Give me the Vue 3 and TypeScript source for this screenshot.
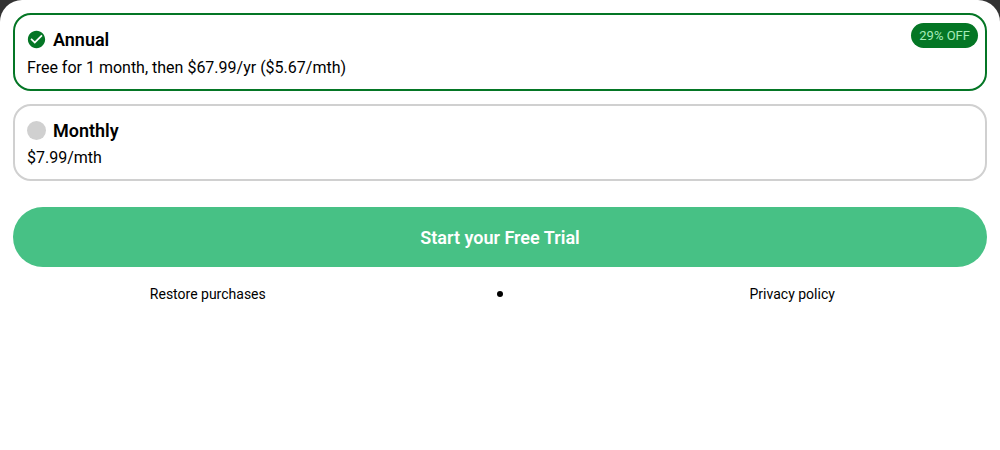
<script setup lang="ts">
import { ref } from 'vue'

interface Plan {
  id: string
  name: string
  price: string
  discount?: string
}

const plans: Plan[] = [
  {
    id: 'annual',
    name: 'Annual',
    price: 'Free for 1 month, then $67.99/yr ($5.67/mth)',
    discount: '29% OFF',
  },
  { id: 'monthly', name: 'Monthly', price: '$7.99/mth' },
]

const selected = ref('annual')
</script>

<template>
  <main class="sheet">
    <form class="paywall" @submit.prevent>
      <div class="plans" role="radiogroup" aria-label="Plans">
        <label
          v-for="plan in plans"
          :key="plan.id"
          class="plan"
          :class="{ selected: selected === plan.id }"
          :for="plan.id"
        >
          <span class="heading">
            <span class="mark">
              <input :id="plan.id" v-model="selected" type="radio" name="plan" :value="plan.id" />
              <svg v-if="selected === plan.id" viewBox="1 1 22 22" aria-hidden="true">
                <path
                  d="M12 2C6.48 2 2 6.48 2 12s4.48 10 10 10 10-4.48 10-10S17.52 2 12 2zm-2 15l-5-5 1.41-1.41L10 14.17l7.59-7.59L19 8l-9 9z"
                />
              </svg>
            </span>
            <span class="name">{{ plan.name }}</span>
          </span>
          <span class="price">{{ plan.price }}</span>
          <span v-if="plan.discount" class="badge">{{ plan.discount }}</span>
        </label>
      </div>
      <button class="cta" type="submit">Start your Free Trial</button>
    </form>
    <footer class="links">
      <a href="#restore">Restore purchases</a>
      <span class="dot"></span>
      <a href="#privacy">Privacy policy</a>
    </footer>
  </main>
</template>

<style>
body {
  background: #333333;
}
</style>

<style scoped>
.sheet {
  box-sizing: border-box;
  min-height: 100vh;
  padding: 13px;
  border-radius: 22px 22px 0 0;
  background: #ffffff;
  color: #000000;
  font-family: Roboto, 'Liberation Sans', sans-serif;
}

.paywall {
  display: flex;
  flex-direction: column;
  gap: 26px;
}

.plans {
  display: flex;
  flex-direction: column;
  gap: 13px;
}

.plan {
  position: relative;
  display: flex;
  flex-direction: column;
  gap: 4px;
  padding: 12px 12px 11px;
  border: 2px solid #d0d0d0;
  border-radius: 18px;
  cursor: pointer;
}

.plan.selected {
  gap: 5px;
  border-color: #047625;
}

.heading {
  display: flex;
  align-items: flex-start;
  gap: 7px;
}

.mark {
  display: grid;
  width: 19px;
  height: 19px;
  margin-top: 3px;
}

.mark input,
.mark svg {
  grid-area: 1 / 1;
  width: 19px;
  height: 19px;
}

.mark input {
  appearance: none;
  margin: 0;
  border-radius: 50%;
  background: #d0d0d0;
}

.mark input:checked {
  background: transparent;
}

.mark svg {
  fill: #047625;
  pointer-events: none;
}

.name {
  font-size: 18px;
  line-height: 26px;
  font-weight: 600;
}

.price {
  font-size: 16px;
  line-height: 20px;
}

.badge {
  position: absolute;
  top: 8px;
  right: 7px;
  padding: 0 8px;
  border-radius: 13px;
  background: #047625;
  color: #a4ecb8;
  font-size: 13px;
  line-height: 25px;
}

.cta {
  height: 60px;
  border: 0;
  border-radius: 30px;
  background: #47c185;
  color: #ffffff;
  font-family: inherit;
  font-size: 18px;
  font-weight: 600;
  cursor: pointer;
}

.links {
  display: grid;
  grid-template-columns: 2fr 1fr 2fr;
  align-items: center;
  justify-items: center;
  margin-top: 17px;
  font-size: 14px;
  line-height: 20px;
}

.links a {
  color: inherit;
  text-decoration: none;
}

.dot {
  width: 6px;
  height: 6px;
  border-radius: 50%;
  background: #000000;
}
</style>
